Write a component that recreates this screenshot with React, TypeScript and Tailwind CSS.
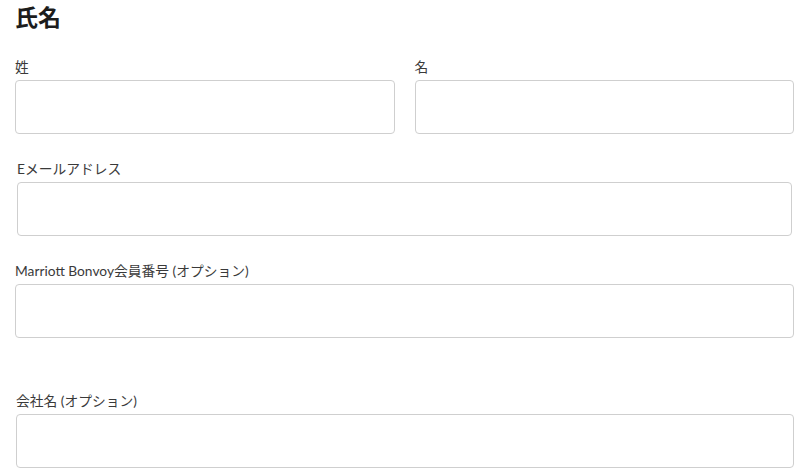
import React from "react";

const font = { fontFamily: '"Lato", "Noto Sans CJK JP", sans-serif' };

function Field({ label, className = "" }: { label: string; className?: string }) {
  return (
    <div className={className}>
      <label className="block h-[20px] leading-[20px] text-[13.75px] text-[#3a3a3a] mb-[3px] whitespace-nowrap">
        {label}
      </label>
      <input
        type="text"
        className="block w-full h-[54px] rounded-[4px] border border-[#cfcfcf] bg-white outline-none"
      />
    </div>
  );
}

export default function App() {
  return (
    <div className="w-[805px] h-[476px] bg-white pl-[15px] pr-[11px] pt-[3px] overflow-hidden" style={font}>
      <h2 className="h-[28px] leading-[28px] text-[23px] font-bold text-[#1c1c1c]">氏名</h2>

      <div className="grid grid-cols-2 gap-5 mt-[26px]">
        <Field label="姓" />
        <Field label="名" />
      </div>

      <Field label="Eメールアドレス" className="mt-[25px] mx-[2px]" />

      <Field label="Marriott Bonvoy会員番号 (オプション)" className="mt-[25px]" />

      <Field label="会社名 (オプション)" className="mt-[53px] ml-[1px]" />
    </div>
  );
}
